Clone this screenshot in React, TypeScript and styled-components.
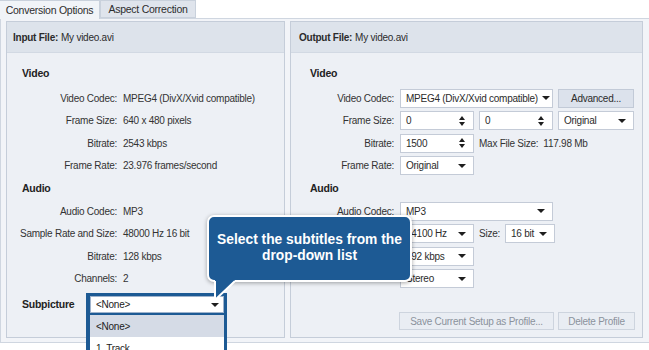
import React from 'react';
import styled, { createGlobalStyle } from 'styled-components';

const GlobalStyle = createGlobalStyle`
  html, body {
    margin: 0;
    padding: 0;
    overflow: hidden;
    background: #fff;
  }
  body {
    font-family: 'Liberation Sans', Arial, sans-serif;
    font-size: 10px;
    letter-spacing: -0.25px;
    color: #333;
  }
`;

const BLUE = '#1d5a94';

const Page = styled.div`
  position: relative;
  width: 649px;
  height: 350px;
  overflow: hidden;
  background: #fff;
`;

const TabBar = styled.div`
  display: flex;
  height: 18px;
  position: relative;
  z-index: 1;
`;

const Tab = styled.div<{ $active?: boolean; $w: number }>`
  box-sizing: border-box;
  width: ${p => p.$w}px;
  height: ${p => (p.$active ? 19 : 18)}px;
  display: flex;
  align-items: center;
  justify-content: center;
  padding-bottom: ${p => (p.$active ? 1 : 0)}px;
  background: ${p => (p.$active ? '#f1f4f8' : '#dfe4ec')};
  border: 1px solid #c9d1dc;
  border-bottom: ${p => (p.$active ? 'none' : '1px solid #c9d1dc')};
  border-left: ${p => (p.$active ? 'none' : '1px solid #c9d1dc')};
  color: #2d2d2d;
  font-size: 10.5px;
  white-space: nowrap;
`;

const Frame = styled.div`
  box-sizing: border-box;
  height: 325px;
  width: 649px;
  display: flex;
  gap: 5px;
  padding: 2px 5px 0 5px;
  background: #f2f4f8;
  border: 1px solid #cfd6e0;
  border-right: none;
`;

const Panel = styled.div<{ $w: number }>`
  box-sizing: border-box;
  width: ${p => p.$w}px;
  height: 317px;
  display: flex;
  flex-direction: column;
  background: #edf0f5;
  border: 1px solid #c5cdd9;
`;

const PanelHeader = styled.div<{ $pad: number }>`
  height: 30px;
  display: flex;
  align-items: center;
  padding-left: ${p => p.$pad}px;
  background: #dde3eb;
  border-bottom: 1px solid #d2d9e3;
  color: #2b2b2b;
  b {
    margin-right: 3px;
  }
`;

const PanelBody = styled.div`
  flex: 1;
  padding-top: 9px;
  position: relative;
`;

const SectionTitle = styled.div<{ $pad: number }>`
  height: 22px;
  display: flex;
  align-items: center;
  padding-left: ${p => p.$pad}px;
  font-weight: bold;
  font-size: 10.5px;
  color: #222;
`;

const Group = styled.div<{ $top: number }>`
  margin-top: ${p => p.$top}px;
`;

const Row = styled.div<{ $label: number }>`
  display: grid;
  grid-template-columns: ${p => p.$label}px 1fr;
  column-gap: 6px;
  align-items: center;
  height: 22.5px;
`;

const Label = styled.div`
  text-align: right;
  white-space: nowrap;
  color: #333;
`;

const Value = styled.div`
  white-space: nowrap;
  color: #333;
`;

const Controls = styled.div`
  display: flex;
  align-items: center;
  gap: 5px;
  white-space: nowrap;
`;

const Box = styled.div<{ $w: number }>`
  box-sizing: border-box;
  width: ${p => p.$w}px;
  height: 19px;
  display: flex;
  align-items: center;
  justify-content: space-between;
  gap: 4px;
  padding: 0 7px 0 5px;
  background: #fff;
  border: 1px solid #c4cbd7;
  color: #2b2b2b;
  white-space: nowrap;
  overflow: hidden;
`;

const Caret = styled.span`
  flex-shrink: 0;
  width: 0;
  height: 0;
  border-left: 4px solid transparent;
  border-right: 4px solid transparent;
  border-top: 4px solid #1e1e1e;
`;

const SpinArrows = styled.span`
  display: flex;
  flex-direction: column;
  gap: 2px;
  margin-right: 1px;
`;

const ArrowUp = styled.span`
  width: 0;
  height: 0;
  border-left: 3.5px solid transparent;
  border-right: 3.5px solid transparent;
  border-bottom: 4px solid #1e1e1e;
`;

const ArrowDown = styled.span`
  width: 0;
  height: 0;
  border-left: 3.5px solid transparent;
  border-right: 3.5px solid transparent;
  border-top: 4px solid #1e1e1e;
`;

const Button = styled.div<{ $w: number; $disabled?: boolean }>`
  box-sizing: border-box;
  width: ${p => p.$w}px;
  height: ${p => (p.$disabled ? 18 : 19)}px;
  display: flex;
  align-items: center;
  justify-content: center;
  background: ${p => (p.$disabled ? '#e9edf3' : '#dce2ec')};
  border: 1px solid ${p => (p.$disabled ? '#cdd4de' : '#c2cad7')};
  color: ${p => (p.$disabled ? '#8b929c' : '#2b2b2b')};
  white-space: nowrap;
`;

const ButtonRow = styled.div`
  display: flex;
  gap: 4px;
  margin-top: 22px;
  padding-left: 108px;
`;

const SubRow = styled.div`
  display: flex;
  align-items: center;
  height: 22px;
  margin-top: 3px;
  padding-left: 15px;
`;

const SubLabel = styled.div`
  width: 64px;
  font-weight: bold;
  font-size: 10.5px;
  color: #222;
`;

const DropAnchor = styled.div`
  position: relative;
  width: 141px;
  height: 22px;
  align-self: flex-start;
`;

const DropFrame = styled.div`
  position: absolute;
  left: 0;
  top: 0;
  width: 141px;
  box-sizing: border-box;
  display: flex;
  flex-direction: column;
  gap: 2px;
  padding: 3px 3px 0 4px;
  background: ${BLUE};
  z-index: 2;
`;

const DropSelect = styled.div`
  box-sizing: border-box;
  height: 17px;
  display: flex;
  align-items: center;
  justify-content: space-between;
  padding: 0 4px 0 5px;
  background: #fff;
  border: 1px solid #9fb3cc;
  color: #222;
`;

const DropList = styled.div`
  background: #fff;
  height: 50px;
`;

const DropItem = styled.div<{ $hi?: boolean }>`
  height: 22px;
  display: flex;
  align-items: center;
  padding-left: 6px;
  background: ${p => (p.$hi ? '#d5dbe6' : '#fff')};
  color: #222;
`;

const Callout = styled.div`
  position: absolute;
  left: 207px;
  top: 215px;
  width: 205px;
  height: 67px;
  box-sizing: border-box;
  padding-top: 15px;
  background: ${BLUE};
  border: 2px solid #fff;
  border-radius: 7px;
  box-shadow: 0 1px 4px rgba(0, 0, 0, 0.35);
  color: #fff;
  font-family: 'Liberation Sans', Arial, sans-serif;
  font-weight: bold;
  font-size: 13.8px;
  letter-spacing: 0;
  line-height: 16px;
  text-align: center;
  z-index: 3;
`;

const Tail = styled.svg`
  position: absolute;
  left: 4px;
  top: 60px;
  overflow: visible;
`;

const Select = ({ w, text }: { w: number; text: string }) => (
  <Box $w={w}>
    <span>{text}</span>
    <Caret />
  </Box>
);

const Spinner = ({ w, text }: { w: number; text: string }) => (
  <Box $w={w}>
    <span>{text}</span>
    <SpinArrows>
      <ArrowUp />
      <ArrowDown />
    </SpinArrows>
  </Box>
);

const inputInfo = {
  video: [
    ['Video Codec:', 'MPEG4 (DivX/Xvid compatible)'],
    ['Frame Size:', '640 x 480 pixels'],
    ['Bitrate:', '2543 kbps'],
    ['Frame Rate:', '23.976 frames/second'],
  ],
  audio: [
    ['Audio Codec:', 'MP3'],
    ['Sample Rate and Size:', '48000 Hz 16 bit'],
    ['Bitrate:', '128 kbps'],
    ['Channels:', '2'],
  ],
};

export default function App() {
  return (
    <Page>
      <GlobalStyle />
      <TabBar>
        <Tab $active $w={100}>Conversion Options</Tab>
        <Tab $w={96}>Aspect Correction</Tab>
      </TabBar>
      <Frame>
        <Panel $w={279}>
          <PanelHeader $pad={6}>
            <b>Input File:</b> My video.avi
          </PanelHeader>
          <PanelBody>
            <SectionTitle $pad={15}>Video</SectionTitle>
            <Group $top={3}>
              {inputInfo.video.map(([l, v]) => (
                <Row $label={110} key={l}>
                  <Label>{l}</Label>
                  <Value>{v}</Value>
                </Row>
              ))}
            </Group>
            <SectionTitle $pad={15}>Audio</SectionTitle>
            <Group $top={1}>
              {inputInfo.audio.map(([l, v]) => (
                <Row $label={110} key={l}>
                  <Label>{l}</Label>
                  <Value>{v}</Value>
                </Row>
              ))}
            </Group>
            <SubRow>
              <SubLabel>Subpicture</SubLabel>
              <DropAnchor>
                <DropFrame>
                  <DropSelect>
                    <span>&lt;None&gt;</span>
                    <Caret />
                  </DropSelect>
                  <DropList>
                    <DropItem $hi>&lt;None&gt;</DropItem>
                    <DropItem>1. Track</DropItem>
                  </DropList>
                </DropFrame>
              </DropAnchor>
            </SubRow>
          </PanelBody>
        </Panel>
        <Panel $w={353}>
          <PanelHeader $pad={8}>
            <b>Output File:</b> My video.avi
          </PanelHeader>
          <PanelBody>
            <SectionTitle $pad={19}>Video</SectionTitle>
            <Group $top={3}>
              <Row $label={103}>
                <Label>Video Codec:</Label>
                <Controls>
                  <Select w={153} text="MPEG4 (DivX/Xvid compatible)" />
                  <Button $w={76}>Advanced...</Button>
                </Controls>
              </Row>
              <Row $label={103}>
                <Label>Frame Size:</Label>
                <Controls>
                  <Spinner w={74} text="0" />
                  <Spinner w={74} text="0" />
                  <Select w={76} text="Original" />
                </Controls>
              </Row>
              <Row $label={103}>
                <Label>Bitrate:</Label>
                <Controls>
                  <Spinner w={74} text="1500" />
                  <span>
                    Max File Size:&nbsp;&nbsp;117.98 Mb
                  </span>
                </Controls>
              </Row>
              <Row $label={103}>
                <Label>Frame Rate:</Label>
                <Controls>
                  <Select w={74} text="Original" />
                </Controls>
              </Row>
            </Group>
            <SectionTitle $pad={19}>Audio</SectionTitle>
            <Group $top={1}>
              <Row $label={103}>
                <Label>Audio Codec:</Label>
                <Controls>
                  <Select w={153} text="MP3" />
                </Controls>
              </Row>
              <Row $label={103}>
                <Label>Sample Rate:</Label>
                <Controls>
                  <Select w={74} text="44100 Hz" />
                  <span>Size:</span>
                  <Select w={50} text="16 bit" />
                </Controls>
              </Row>
              <Row $label={103}>
                <Label>Bitrate:</Label>
                <Controls>
                  <Select w={74} text="192 kbps" />
                </Controls>
              </Row>
              <Row $label={103}>
                <Label>Channels:</Label>
                <Controls>
                  <Select w={74} text="Stereo" />
                </Controls>
              </Row>
            </Group>
            <ButtonRow>
              <Button $w={155} $disabled>Save Current Setup as Profile...</Button>
              <Button $w={77} $disabled>Delete Profile</Button>
            </ButtonRow>
          </PanelBody>
        </Panel>
      </Frame>
      <Callout>
        Select the subtitles from the
        <br />
        drop-down list
        <Tail width="24" height="25" viewBox="0 0 24 25">
          <path d="M2 0 L22 0 L22 4 L2 23 Z" fill={BLUE} />
          <path d="M2 4 L2 23 L22 4" fill="none" stroke="#fff" strokeWidth="2" strokeLinejoin="miter" />
        </Tail>
      </Callout>
    </Page>
  );
}
